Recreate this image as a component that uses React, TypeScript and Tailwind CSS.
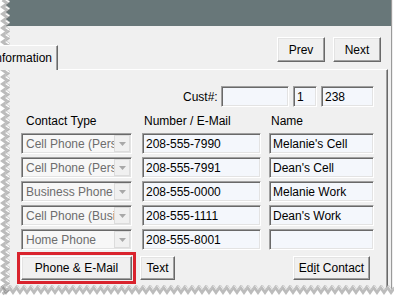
import React from 'react';

const sunken =
  'border border-t-[#a0a0a0] border-l-[#a0a0a0] border-b-white border-r-white shadow-[inset_1px_1px_0_#696969,inset_-1px_-1px_0_#e3e3e3]';
const raised =
  'border border-t-white border-l-white border-b-[#696969] border-r-[#696969] shadow-[inset_-1px_-1px_0_#a0a0a0,inset_1px_1px_0_#e3e3e3] bg-[#f0f0f0]';

type Row = { type: string; number: string; name: string };

const rows: Row[] = [
  { type: 'Cell Phone (Personal)', number: '208-555-7990', name: "Melanie's Cell" },
  { type: 'Cell Phone (Personal)', number: '208-555-7991', name: "Dean's Cell" },
  { type: 'Business Phone', number: '208-555-0000', name: 'Melanie Work' },
  { type: 'Cell Phone (Business)', number: '208-555-1111', name: "Dean's Work" },
  { type: 'Home Phone', number: '208-555-8001', name: '' }
];

function TextBox({ value, className }: { value: string; className: string }) {
  return (
    <div className={`${sunken} ${className} h-[21px] bg-[#f4f7fc] flex items-center pl-[3px] text-black overflow-hidden whitespace-nowrap`}>
      {value}
    </div>
  );
}

function Combo({ value }: { value: string }) {
  return (
    <div className={`${sunken} w-[111px] h-[21px] bg-[#f7f7f7] flex items-center overflow-hidden`}>
      <span className="flex-1 pl-[4px] text-[#6d6d6d] whitespace-nowrap overflow-hidden">{value}</span>
      <span className="w-[16px] h-[17px] mr-[1px] bg-[#f0f0f0] border border-[#dcdcdc] flex items-center justify-center">
        <svg width="7" height="4" viewBox="0 0 7 4">
          <path d="M0 0h7L3.5 4z" fill="#a8a8a8" />
        </svg>
      </span>
    </div>
  );
}

function Button({ label, className }: { label: React.ReactNode; className: string }) {
  return (
    <div className={`${raised} ${className} h-[24px] flex items-center justify-center text-black whitespace-nowrap`}>
      {label}
    </div>
  );
}

function TornEdges() {
  const left: string[] = [];
  for (let i = 0, y = -2; y <= 292; i++, y += 3.5) left.push(`${i % 2 ? 10 : 5},${y}`);
  const bottom: string[] = [];
  for (let i = 0, x = 0; x <= 396; i++, x += 3.5) bottom.push(`${x},${i % 2 ? 285 : 290}`);
  const leftPoly = `0,0 ${left.join(' ')} 0,292`;
  const bottomPoly = `0,303 0,285 ${bottom.join(' ')} 394,285 394,303`;
  const leftShadow = left.map((p) => {
    const [x, y] = p.split(',').map(Number);
    return `${x - 2.5},${y + 2}`;
  });
  const bottomShadow = bottom.map((p) => {
    const [x, y] = p.split(',').map(Number);
    return `${x - 1},${y + 2.5}`;
  });
  return (
    <svg className="absolute inset-0 pointer-events-none" width="394" height="303" viewBox="0 0 394 303">
      <polygon points={leftPoly} fill="#ffffff" />
      <polygon points={bottomPoly} fill="#ffffff" />
      <polyline points={leftShadow.join(' ')} fill="none" stroke="#7a7a7a" strokeWidth="3" opacity="0.5" />
      <polyline points={bottomShadow.join(' ')} fill="none" stroke="#7a7a7a" strokeWidth="3" opacity="0.5" />
      <polyline points={left.join(' ')} fill="none" stroke="#c8c8c8" strokeWidth="0.8" />
      <polyline points={bottom.join(' ')} fill="none" stroke="#c8c8c8" strokeWidth="0.8" />
    </svg>
  );
}

export default function App() {
  return (
    <div className="relative w-[394px] h-[303px] bg-white overflow-hidden font-['Liberation_Sans',Arial,sans-serif] text-[12px] text-black">
      <div className="w-[391px] h-[295px] bg-[#f0f0f0] shadow-[1px_0_1px_#9a9a9a] flex flex-col">
        <div className="h-[26px] bg-[#687779] shrink-0" />

        <div className="h-[43px] flex items-start shrink-0">
          <div className="self-end w-[58px] h-[25px] mb-[-1px] z-10 bg-[#f0f0f0] border-t border-t-white border-r border-r-[#696969] shadow-[inset_-1px_0_0_#a0a0a0] flex items-center justify-end pr-[5px] overflow-hidden whitespace-nowrap">
            Information
          </div>
          <div className="ml-auto mr-[10px] mt-[11px] flex gap-[8px]">
            <Button label="Prev" className="w-[48px] h-[25px]" />
            <Button label="Next" className="w-[48px] h-[25px]" />
          </div>
        </div>

        <div className="w-[388px] flex-1 border-t border-t-white border-r border-r-[#696969] shadow-[inset_-1px_0_0_#a0a0a0] flex flex-col">
          <div className="mt-[16px] h-[21px] flex items-center">
            <span className="ml-[183px] w-[38px]">Cust#:</span>
            <TextBox value="" className="w-[68px]" />
            <TextBox value="1" className="w-[24px] ml-[4px]" />
            <TextBox value="238" className="w-[53px] ml-[4px]" />
          </div>

          <div className="mt-[7px] h-[14px] flex items-center">
            <span className="ml-[26px] w-[118px]">Contact Type</span>
            <span className="w-[127px]">Number / E-Mail</span>
            <span>Name</span>
          </div>

          <div className="mt-[5px] flex flex-col gap-[3px]">
            {rows.map((row, index) => (
              <div key={index} className="flex items-center ml-[21px]">
                <Combo value={row.type} />
                <TextBox value={row.number} className="w-[119px] ml-[10px]" />
                <TextBox value={row.name} className="w-[105px] ml-[8px]" />
              </div>
            ))}
          </div>

          <div className="mt-[2px] flex items-center">
            <div className="ml-[17px] border-[3px] border-[#d9232d] p-[1px]">
              <Button label="Phone & E-Mail" className="w-[111px]" />
            </div>
            <Button label="Text" className="w-[35px] ml-[4px]" />
            <Button
              label={
                <span>
                  Ed<span className="underline">i</span>t Contact
                </span>
              }
              className="w-[77px] ml-auto mr-[17px]"
            />
          </div>
        </div>
      </div>
      <TornEdges />
    </div>
  );
}
